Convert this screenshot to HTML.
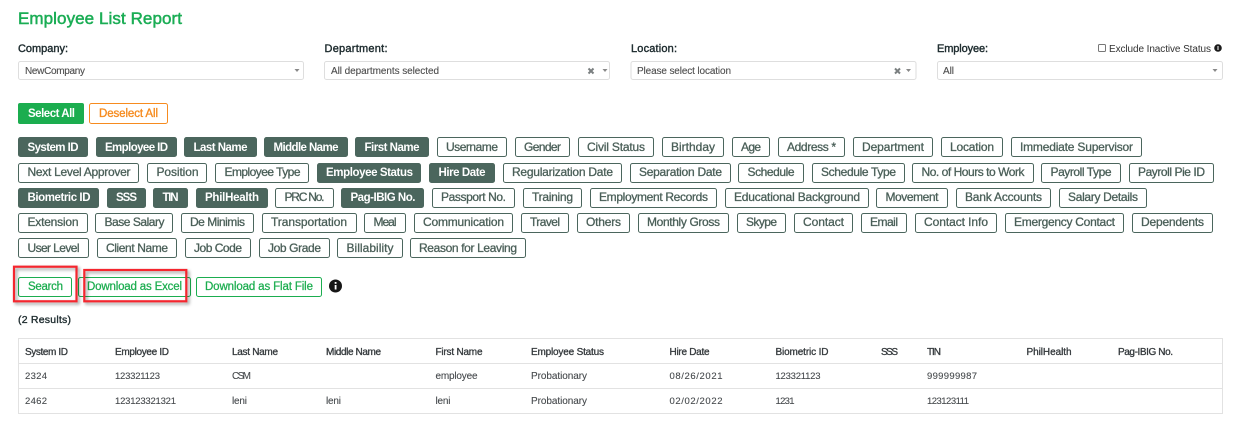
<!DOCTYPE html>
<html><head><meta charset="utf-8"><style>
html,body{margin:0;padding:0;background:#fff;width:1246px;height:438px;overflow:hidden}
svg{display:block;font-family:"Liberation Sans",sans-serif}
.t rect{fill:#fff;stroke:#4b665d;stroke-width:1}
.t text{fill:#4a5f58;font-size:12px;stroke:#4a5f58;stroke-width:.3}
.s rect{fill:#4b665d;stroke:#4b665d;stroke-width:1}
.s text{fill:#fff;font-size:11.5px;font-weight:bold}
.l{fill:#1d2b2e;font-size:11px;stroke:#1d2b2e;stroke-width:.4}
.v{fill:#4f4f4f;font-size:10px;stroke:#4f4f4f;stroke-width:.12}
.sel{fill:#fff;stroke:#dedede;stroke-width:1}
.h{fill:#33383b;font-size:10px;stroke:#33383b;stroke-width:.3}
.d{fill:#45494c;font-size:10px;stroke:#45494c;stroke-width:.1}
.n{fill:#45494c;font-size:9.5px;stroke:#45494c;stroke-width:.1}
.g{fill:#1bad4f;font-size:11.5px;stroke:#1bad4f;stroke-width:.25}
.gb{fill:#fff;stroke:#1bad4f;stroke-width:1}
.line{stroke:#e2e2e2;stroke-width:1}
.a{fill:#888}
.r{fill:none;stroke:#f5262e;stroke-width:2.2;filter:drop-shadow(2px 2px 1.5px rgba(0,0,0,.4))}
</style></head><body>
<svg width="1246" height="438" viewBox="0 0 1246 438" xmlns="http://www.w3.org/2000/svg">
<text x="18" y="24" font-size="17px" fill="#1bad55" stroke="#1bad55" stroke-width=".5" textLength="164">Employee List Report</text>

<text class="l" x="18" y="52" textLength="50">Company:</text>
<text class="l" x="324.500" y="52" textLength="63">Department:</text>
<text class="l" x="631" y="52" textLength="46">Location:</text>
<text class="l" x="937" y="52" textLength="51">Employee:</text>
<rect x="1098.500" y="44.500" width="7" height="7" rx="1" fill="#fff" stroke="#777"/>
<text x="1109" y="52" font-size="10px" fill="#333" textLength="102">Exclude Inactive Status</text>
<circle cx="1218" cy="48" r="3.800" fill="#1b1b1b"/><rect x="1217.500" y="46" width="1" height="4" fill="#fff"/>

<rect class="sel" x="18.500" y="61.500" width="285" height="18" rx="2"/>
<rect class="sel" x="324.500" y="61.500" width="285" height="18" rx="2"/>
<rect class="sel" x="631" y="61.500" width="285" height="18" rx="2"/>
<rect class="sel" x="937.500" y="61.500" width="285" height="18" rx="2"/>
<text class="v" x="25" y="74" textLength="60">NewCompany</text>
<text class="v" x="331" y="74" textLength="108">All departments selected</text>
<text class="v" x="637" y="74" textLength="94">Please select location</text>
<text class="v" x="943" y="74" textLength="11">All</text>
<path class="a" d="M294.500 69h5l-2.500 3zM602.500 69h5l-2.500 3zM906 69h5l-2.500 3zM1212.500 69h5l-2.500 3z"/>
<path d="M588.500 68.500l5 5m0-5l-5 5M895 68.500l5 5m0-5l-5 5" stroke="#7a7f80" stroke-width="2" fill="none"/>

<rect x="18" y="103" width="66" height="21" rx="2" fill="#1bad4f"/>
<text x="28" y="117" font-size="11.500px" font-weight="bold" fill="#fff" textLength="47">Select All</text>
<rect x="89.500" y="103.500" width="78" height="20" rx="2" fill="#fff" stroke="#f68b1f"/>
<text x="99" y="117" font-size="11.500px" fill="#f68b1f" stroke="#f68b1f" stroke-width=".35" textLength="59">Deselect All</text>

<!-- Row 1 -->
<g class="s"><rect x="18.500" y="137.500" width="69" height="19" rx="2"/><text x="27.500" y="151" textLength="51">System ID</text></g>
<g class="s"><rect x="96.500" y="137.500" width="80" height="19" rx="2"/><text x="105" y="151" textLength="63">Employee ID</text></g>
<g class="s"><rect x="184.500" y="137.500" width="72" height="19" rx="2"/><text x="193.500" y="151" textLength="54">Last Name</text></g>
<g class="s"><rect x="264.500" y="137.500" width="83" height="19" rx="2"/><text x="273.500" y="151" textLength="65">Middle Name</text></g>
<g class="s"><rect x="355.500" y="137.500" width="73" height="19" rx="2"/><text x="364.500" y="151" textLength="55">First Name</text></g>
<g class="t"><rect x="437.500" y="137.500" width="69" height="19" rx="2"/><text x="446" y="151" textLength="52">Username</text></g>
<g class="t"><rect x="515.500" y="137.500" width="54" height="19" rx="2"/><text x="524" y="151" textLength="37">Gender</text></g>
<g class="t"><rect x="578.500" y="137.500" width="75" height="19" rx="2"/><text x="587" y="151" textLength="58">Civil Status</text></g>
<g class="t"><rect x="662.500" y="137.500" width="61" height="19" rx="2"/><text x="671" y="151" textLength="44">Birthday</text></g>
<g class="t"><rect x="732.500" y="137.500" width="37" height="19" rx="2"/><text x="741" y="151" textLength="20">Age</text></g>
<g class="t"><rect x="778.500" y="137.500" width="66" height="19" rx="2"/><text x="787" y="151" textLength="49">Address *</text></g>
<g class="t"><rect x="853.500" y="137.500" width="79" height="19" rx="2"/><text x="862" y="151" textLength="62">Department</text></g>
<g class="t"><rect x="941.500" y="137.500" width="61" height="19" rx="2"/><text x="950" y="151" textLength="44">Location</text></g>
<g class="t"><rect x="1011.500" y="137.500" width="130" height="19" rx="2"/><text x="1020" y="151" textLength="113">Immediate Supervisor</text></g>

<!-- Row 2 -->
<g class="t"><rect x="18.500" y="163.500" width="120" height="19" rx="2"/><text x="27.500" y="176" textLength="103">Next Level Approver</text></g>
<g class="t"><rect x="147.500" y="163.500" width="59" height="19" rx="2"/><text x="156.500" y="176" textLength="42">Position</text></g>
<g class="t"><rect x="215.500" y="163.500" width="93" height="19" rx="2"/><text x="224.500" y="176" textLength="76">Employee Type</text></g>
<g class="s"><rect x="317.500" y="163.500" width="103" height="19" rx="2"/><text x="326" y="176" textLength="87">Employee Status</text></g>
<g class="s"><rect x="429.500" y="163.500" width="65" height="19" rx="2"/><text x="438.500" y="176" textLength="47">Hire Date</text></g>
<g class="t"><rect x="503.500" y="163.500" width="118" height="19" rx="2"/><text x="512" y="176" textLength="101">Regularization Date</text></g>
<g class="t"><rect x="630.500" y="163.500" width="100" height="19" rx="2"/><text x="639" y="176" textLength="83">Separation Date</text></g>
<g class="t"><rect x="738.500" y="163.500" width="65" height="19" rx="2"/><text x="747.500" y="176" textLength="47">Schedule</text></g>
<g class="t"><rect x="812.500" y="163.500" width="92" height="19" rx="2"/><text x="821" y="176" textLength="75">Schedule Type</text></g>
<g class="t"><rect x="912.500" y="163.500" width="121" height="19" rx="2"/><text x="921.500" y="176" textLength="103">No. of Hours to Work</text></g>
<g class="t"><rect x="1041.500" y="163.500" width="79" height="19" rx="2"/><text x="1050.500" y="176" textLength="61">Payroll Type</text></g>
<g class="t"><rect x="1129.500" y="163.500" width="84" height="19" rx="2"/><text x="1138" y="176" textLength="67">Payroll Pie ID</text></g>

<!-- Row 3 -->
<g class="s"><rect x="18.500" y="188.500" width="80" height="19" rx="2"/><text x="27.500" y="201" textLength="63">Biometric ID</text></g>
<g class="s"><rect x="107.500" y="188.500" width="38" height="19" rx="2"/><text x="116" y="201" textLength="21">SSS</text></g>
<g class="s"><rect x="153.500" y="188.500" width="34" height="19" rx="2"/><text x="162.500" y="201" textLength="16">TIN</text></g>
<g class="s"><rect x="196.500" y="188.500" width="71" height="19" rx="2"/><text x="205" y="201" textLength="54">PhilHealth</text></g>
<g class="t"><rect x="275.500" y="188.500" width="58" height="19" rx="2"/><text x="284.500" y="201" textLength="40">PRC No.</text></g>
<g class="s"><rect x="341.500" y="188.500" width="82" height="19" rx="2"/><text x="350.500" y="201" textLength="65">Pag-IBIG No.</text></g>
<g class="t"><rect x="432.500" y="188.500" width="82" height="19" rx="2"/><text x="441" y="201" textLength="65">Passport No.</text></g>
<g class="t"><rect x="523.500" y="188.500" width="58" height="19" rx="2"/><text x="532" y="201" textLength="41">Training</text></g>
<g class="t"><rect x="590.500" y="188.500" width="126" height="19" rx="2"/><text x="599" y="201" textLength="109">Employment Records</text></g>
<g class="t"><rect x="725.500" y="188.500" width="143" height="19" rx="2"/><text x="734" y="201" textLength="126">Educational Background</text></g>
<g class="t"><rect x="876.500" y="188.500" width="71" height="19" rx="2"/><text x="885.500" y="201" textLength="53">Movement</text></g>
<g class="t"><rect x="956.500" y="188.500" width="94" height="19" rx="2"/><text x="965" y="201" textLength="77">Bank Accounts</text></g>
<g class="t"><rect x="1059.500" y="188.500" width="87" height="19" rx="2"/><text x="1068" y="201" textLength="70">Salary Details</text></g>

<!-- Row 4 -->
<g class="t"><rect x="18.500" y="213.500" width="69" height="19" rx="2"/><text x="27.500" y="226" textLength="51">Extension</text></g>
<g class="t"><rect x="95.500" y="213.500" width="77" height="19" rx="2"/><text x="104.500" y="226" textLength="60">Base Salary</text></g>
<g class="t"><rect x="181.500" y="213.500" width="72" height="19" rx="2"/><text x="190" y="226" textLength="55">De Minimis</text></g>
<g class="t"><rect x="262.500" y="213.500" width="94" height="19" rx="2"/><text x="271" y="226" textLength="76">Transportation</text></g>
<g class="t"><rect x="364.500" y="213.500" width="41" height="19" rx="2"/><text x="373.500" y="226" textLength="23">Meal</text></g>
<g class="t"><rect x="414.500" y="213.500" width="98" height="19" rx="2"/><text x="423" y="226" textLength="81">Communication</text></g>
<g class="t"><rect x="521.500" y="213.500" width="47" height="19" rx="2"/><text x="530" y="226" textLength="30">Travel</text></g>
<g class="t"><rect x="577.500" y="213.500" width="52" height="19" rx="2"/><text x="586" y="226" textLength="35">Others</text></g>
<g class="t"><rect x="638.500" y="213.500" width="90" height="19" rx="2"/><text x="647" y="226" textLength="73">Monthly Gross</text></g>
<g class="t"><rect x="737.500" y="213.500" width="48" height="19" rx="2"/><text x="746" y="226" textLength="31">Skype</text></g>
<g class="t"><rect x="794.500" y="213.500" width="58" height="19" rx="2"/><text x="803" y="226" textLength="41">Contact</text></g>
<g class="t"><rect x="861.500" y="213.500" width="45" height="19" rx="2"/><text x="870" y="226" textLength="28">Email</text></g>
<g class="t"><rect x="915.500" y="213.500" width="81" height="19" rx="2"/><text x="924" y="226" textLength="64">Contact Info</text></g>
<g class="t"><rect x="1005.500" y="213.500" width="118" height="19" rx="2"/><text x="1014" y="226" textLength="101">Emergency Contact</text></g>
<g class="t"><rect x="1132.500" y="213.500" width="80" height="19" rx="2"/><text x="1141" y="226" textLength="63">Dependents</text></g>

<!-- Row 5 -->
<g class="t"><rect x="18.500" y="238.500" width="70" height="19" rx="2"/><text x="27.500" y="252" textLength="52">User Level</text></g>
<g class="t"><rect x="97.500" y="238.500" width="79" height="19" rx="2"/><text x="106" y="252" textLength="62">Client Name</text></g>
<g class="t"><rect x="185.500" y="238.500" width="65" height="19" rx="2"/><text x="194" y="252" textLength="48">Job Code</text></g>
<g class="t"><rect x="259.500" y="238.500" width="70" height="19" rx="2"/><text x="268" y="252" textLength="53">Job Grade</text></g>
<g class="t"><rect x="337.500" y="238.500" width="65" height="19" rx="2"/><text x="346.500" y="252" textLength="47">Billability</text></g>
<g class="t"><rect x="410.500" y="238.500" width="115" height="19" rx="2"/><text x="419" y="252" textLength="98">Reason for Leaving</text></g>

<!-- Action buttons -->
<rect class="gb" x="18.500" y="277.500" width="53" height="19" rx="2"/>
<text class="g" x="28" y="290" textLength="35">Search</text>
<rect class="gb" x="78.500" y="277.500" width="112" height="19" rx="2"/>
<text class="g" x="87" y="290" textLength="95">Download as Excel</text>
<rect class="gb" x="196.500" y="277.500" width="125" height="19" rx="2"/>
<text class="g" x="205" y="290" textLength="108">Download as Flat File</text>
<circle cx="335.500" cy="286" r="6.500" fill="#161616"/>
<rect x="334.700" y="285" width="1.800" height="4.500" fill="#fff"/><rect x="334.700" y="282" width="1.800" height="1.800" fill="#fff"/>

<!-- Red highlights -->
<rect class="r" x="14" y="266.700" width="62.500" height="34.600"/>
<rect class="r" x="84.300" y="270" width="102" height="31.300"/>

<text x="18" y="323" font-size="10.500px" fill="#1d2b2e" stroke="#1d2b2e" stroke-width=".35" textLength="53">(2 Results)</text>

<!-- Table -->
<rect x="18.500" y="338.500" width="1204" height="75" fill="#fff" stroke="#e2e2e2"/>
<line class="line" x1="18.500" y1="363.500" x2="1222.500" y2="363.500"/>
<line class="line" x1="18.500" y1="388.500" x2="1222.500" y2="388.500"/>

<text class="h" x="25" y="355" textLength="43">System ID</text>
<text class="h" x="115" y="355" textLength="54">Employee ID</text>
<text class="h" x="232" y="355" textLength="46">Last Name</text>
<text class="h" x="326" y="355" textLength="55">Middle Name</text>
<text class="h" x="435.500" y="355" textLength="47">First Name</text>
<text class="h" x="531" y="355" textLength="73">Employee Status</text>
<text class="h" x="669.500" y="355" textLength="40">Hire Date</text>
<text class="h" x="775.500" y="355" textLength="53">Biometric ID</text>
<text class="h" x="881" y="355" textLength="17">SSS</text>
<text class="h" x="927" y="355" textLength="14">TIN</text>
<text class="h" x="1026.500" y="355" textLength="45">PhilHealth</text>
<text class="h" x="1118" y="355" textLength="55">Pag-IBIG No.</text>

<text class="n" x="25" y="379" textLength="22">2324</text>
<text class="n" x="115" y="379" textLength="45">123321123</text>
<text class="d" x="232" y="379" textLength="19">CSM</text>
<text class="d" x="435.500" y="379" textLength="42">employee</text>
<text class="d" x="531" y="379" textLength="56">Probationary</text>
<text class="n" x="669.500" y="379" textLength="53">08/26/2021</text>
<text class="n" x="775.500" y="379" textLength="45">123321123</text>
<text class="n" x="927" y="379" textLength="50">999999987</text>

<text class="n" x="25" y="404" textLength="22">2462</text>
<text class="n" x="115" y="404" textLength="61">123123321321</text>
<text class="d" x="232" y="404" textLength="15">leni</text>
<text class="d" x="326" y="404" textLength="15">leni</text>
<text class="d" x="435.500" y="404" textLength="15">leni</text>
<text class="d" x="531" y="404" textLength="56">Probationary</text>
<text class="n" x="669.500" y="404" textLength="53">02/02/2022</text>
<text class="n" x="775.500" y="404" textLength="19">1231</text>
<text class="n" x="927" y="404" textLength="42">123123111</text>
</svg>
</body></html>
